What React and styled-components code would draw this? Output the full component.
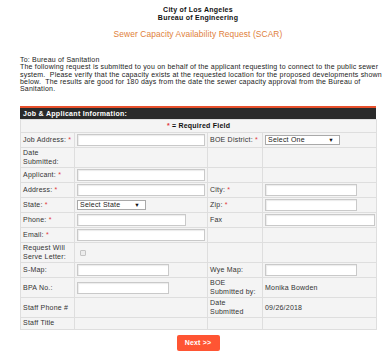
import React from 'react';
import styled, { createGlobalStyle } from 'styled-components';

const GlobalStyle = createGlobalStyle`
  html, body {
    margin: 0;
    padding: 0;
    background: #fff;
  }

  body {
    font-family: "Liberation Sans", Arial, sans-serif;
    color: #222;
  }
`;

const Page = styled.div`
  width: 356px;
  padding: 6px 7px 0 20px;
`;

const Masthead = styled.div`
  text-align: center;
  font-weight: bold;
  font-size: 7px;
  line-height: 8px;
  letter-spacing: 0.25px;
  color: #111;
`;

const Title = styled.h1`
  margin: 7px 0 0;
  text-align: center;
  font-weight: normal;
  font-size: 8.4px;
  line-height: 10px;
  letter-spacing: 0.1px;
  color: #e0803a;
`;

const Intro = styled.div`
  margin-top: 17px;
  font-size: 7px;
  line-height: 7.3px;
  letter-spacing: 0.2px;
  white-space: nowrap;
  color: #222;
`;

const SectionBar = styled.div`
  margin-top: 14px;
  border-top: 2px solid #e8502c;
  background: #2a2a2a;
  color: #fff;
  font-weight: bold;
  font-size: 7px;
  line-height: 11px;
  padding: 0 3px;
  letter-spacing: 0.3px;
`;

const FormTable = styled.table`
  width: 356px;
  border-collapse: collapse;
  table-layout: fixed;
  background: #f4f4f4;
  border: 1px solid #d6d6d6;
  border-top: none;
  font-size: 7px;
  line-height: 8.5px;
  letter-spacing: 0.22px;
  color: #333;

  td {
    border: 1px solid #dedede;
    padding: 1px 2px;
    vertical-align: middle;
  }
`;

const Col = styled.col`
  width: ${props => props.w}px;
`;

const NoteCell = styled.td`
  text-align: center;
  font-weight: bold;
  color: #111;
  height: 10px;
`;

const Label = styled.td`
  color: #333;
`;

const Star = styled.span`
  color: #e2383a;
`;

const TextInput = styled.span`
  display: block;
  box-sizing: border-box;
  width: ${props => props.w}px;
  height: 12px;
  background: #fff;
  border: 1px solid #c9c9c9;
  box-shadow: inset 1px 1px 1px rgba(0, 0, 0, 0.08);
`;

const SelectBox = styled.span`
  display: flex;
  align-items: center;
  justify-content: space-between;
  box-sizing: border-box;
  width: ${props => props.w}px;
  height: 10px;
  padding: 0 5px 0 2px;
  background: #fff;
  border: 1px solid #a9a9a9;
  color: #222;
`;

const Arrow = styled.span`
  font-size: 5.5px;
  color: #111;
`;

const Checkbox = styled.span`
  display: block;
  width: 4px;
  height: 4px;
  margin-left: 3px;
  border: 1px solid #c4c4c4;
  border-radius: 1px;
  background: #ececec;
`;

const Footer = styled.div`
  display: flex;
  justify-content: center;
  padding-top: 5px;
`;

const NextButton = styled.button`
  width: 43px;
  height: 16px;
  border: none;
  border-radius: 2px;
  background: #ff5533;
  color: #fff;
  font-family: "Liberation Sans", Arial, sans-serif;
  font-size: 7px;
  font-weight: bold;
  letter-spacing: 0.2px;
  padding: 0;
`;

const Req = ({ children }) => (
  <Label>
    {children} <Star>*</Star>
  </Label>
);

export default function App() {
  return (
    <Page>
      <GlobalStyle />
      <Masthead>
        <div>City of Los Angeles</div>
        <div>Bureau of Engineering</div>
      </Masthead>
      <Title>Sewer Capacity Availability Request (SCAR)</Title>
      <Intro>
        To: Bureau of Sanitation
        <br />
        The following request is submitted to you on behalf of the applicant requesting to connect to the public sewer
        <br />
        system.&nbsp; Please verify that the capacity exists at the requested location for the proposed developments shown
        <br />
        below.&nbsp; The results are good for 180 days from the date the sewer capacity approval from the Bureau of
        <br />
        Sanitation.
      </Intro>
      <SectionBar>Job &amp; Applicant Information:</SectionBar>
      <FormTable>
        <colgroup>
          <Col w={54} />
          <Col w={133} />
          <Col w={55} />
          <Col w={114} />
        </colgroup>
        <tbody>
          <tr>
            <NoteCell colSpan={4}>
              <Star>*</Star> = Required Field
            </NoteCell>
          </tr>
          <tr>
            <Req>Job Address:</Req>
            <td><TextInput w={128} /></td>
            <Req>BOE District:</Req>
            <td><SelectBox w={75}>Select One<Arrow>▼</Arrow></SelectBox></td>
          </tr>
          <tr>
            <Label>Date<br />Submitted:</Label>
            <td />
            <td />
            <td />
          </tr>
          <tr>
            <Req>Applicant:</Req>
            <td><TextInput w={128} /></td>
            <td />
            <td />
          </tr>
          <tr>
            <Req>Address:</Req>
            <td><TextInput w={128} /></td>
            <Req>City:</Req>
            <td><TextInput w={92} /></td>
          </tr>
          <tr>
            <Req>State:</Req>
            <td><SelectBox w={69}>Select State<Arrow>▼</Arrow></SelectBox></td>
            <Req>Zip:</Req>
            <td><TextInput w={92} /></td>
          </tr>
          <tr>
            <Req>Phone:</Req>
            <td><TextInput w={109} /></td>
            <Label>Fax</Label>
            <td><TextInput w={110} /></td>
          </tr>
          <tr>
            <Req>Email:</Req>
            <td><TextInput w={128} /></td>
            <td />
            <td />
          </tr>
          <tr>
            <Label>Request Will<br />Serve Letter:</Label>
            <td><Checkbox /></td>
            <td />
            <td />
          </tr>
          <tr>
            <Label>S-Map:</Label>
            <td><TextInput w={92} /></td>
            <Label>Wye Map:</Label>
            <td><TextInput w={92} /></td>
          </tr>
          <tr>
            <Label>BPA No.:</Label>
            <td><TextInput w={92} /></td>
            <Label>BOE<br />Submitted by:</Label>
            <td>Monika Bowden</td>
          </tr>
          <tr>
            <Label>Staff Phone #</Label>
            <td />
            <Label>Date<br />Submitted</Label>
            <td>09/26/2018</td>
          </tr>
          <tr>
            <Label>Staff Title</Label>
            <td />
            <td />
            <td />
          </tr>
        </tbody>
      </FormTable>
      <Footer>
        <NextButton>Next &gt;&gt;</NextButton>
      </Footer>
    </Page>
  );
}
